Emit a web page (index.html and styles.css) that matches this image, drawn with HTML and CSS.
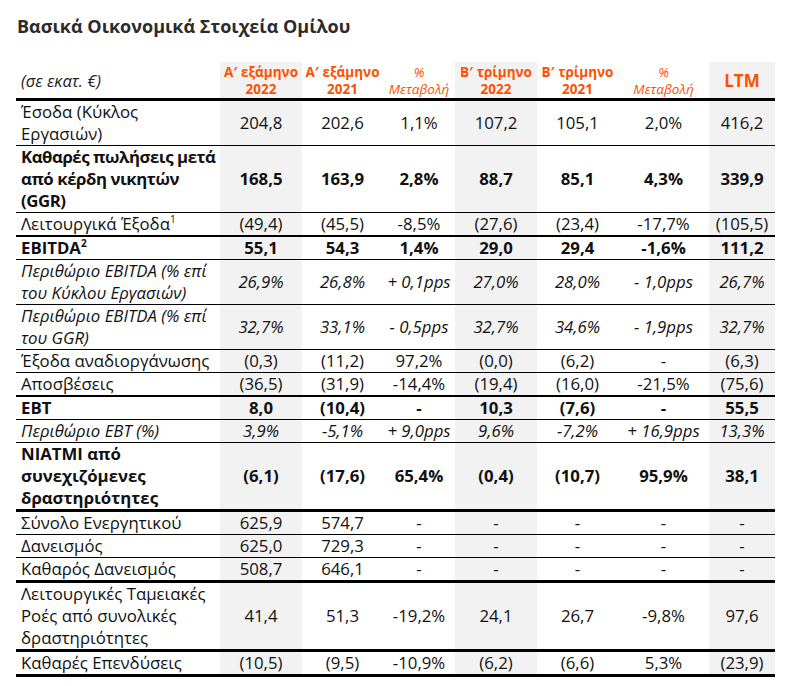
FILE: index.html
```html
<!DOCTYPE html>
<html lang="el">
<head>
<meta charset="utf-8">
<link rel="stylesheet" href="styles.css">
</head>
<body>
<h1 class="title">Βασικά Οικονομικά Στοιχεία Ομίλου</h1>
<table class="fin">
  <colgroup>
    <col class="c-label"><col class="c-a"><col class="c-b"><col class="c-c"><col class="c-d"><col class="c-e"><col class="c-f"><col class="c-g">
  </colgroup>
  <thead>
    <tr class="thick3">
      <th class="unit">(σε εκατ. €)</th>
      <th class="hd shade">Α′ εξάμηνο<br>2022</th>
      <th class="hd">Α′ εξάμηνο<br>2021</th>
      <th class="hp">%<br>Μεταβολή</th>
      <th class="hd shade">Β′ τρίμηνο<br>2022</th>
      <th class="hd">Β′ τρίμηνο<br>2021</th>
      <th class="hp">%<br>Μεταβολή</th>
      <th class="hd ltm shade">LTM</th>
    </tr>
  </thead>
  <tbody>
    <tr><td class="lbl">Έσοδα (Κύκλος Εργασιών)</td><td class="shade">204,8</td><td>202,6</td><td>1,1%</td><td class="shade">107,2</td><td>105,1</td><td>2,0%</td><td class="shade">416,2</td></tr>
    <tr class="b"><td class="lbl tight">Καθαρές πωλήσεις μετά από κέρδη νικητών (GGR)</td><td class="shade">168,5</td><td>163,9</td><td>2,8%</td><td class="shade">88,7</td><td>85,1</td><td>4,3%</td><td class="shade">339,9</td></tr>
    <tr class="thick2"><td class="lbl">Λειτουργικά Έξοδα<sup>1</sup></td><td class="shade">(49,4)</td><td>(45,5)</td><td>-8,5%</td><td class="shade">(27,6)</td><td>(23,4)</td><td>-17,7%</td><td class="shade">(105,5)</td></tr>
    <tr class="b"><td class="lbl">EBITDA<sup>2</sup></td><td class="shade">55,1</td><td>54,3</td><td>1,4%</td><td class="shade">29,0</td><td>29,4</td><td>-1,6%</td><td class="shade">111,2</td></tr>
    <tr class="i"><td class="lbl">Περιθώριο EBITDA (% επί του Κύκλου Εργασιών)</td><td class="shade">26,9%</td><td>26,8%</td><td>+ 0,1pps</td><td class="shade">27,0%</td><td>28,0%</td><td>- 1,0pps</td><td class="shade">26,7%</td></tr>
    <tr class="i"><td class="lbl">Περιθώριο EBITDA (% επί του GGR)</td><td class="shade">32,7%</td><td>33,1%</td><td>- 0,5pps</td><td class="shade">32,7%</td><td>34,6%</td><td>- 1,9pps</td><td class="shade">32,7%</td></tr>
    <tr><td class="lbl">Έξοδα αναδιοργάνωσης</td><td class="shade">(0,3)</td><td>(11,2)</td><td>97,2%</td><td class="shade">(0,0)</td><td>(6,2)</td><td>-</td><td class="shade">(6,3)</td></tr>
    <tr class="thick2"><td class="lbl">Αποσβέσεις</td><td class="shade">(36,5)</td><td>(31,9)</td><td>-14,4%</td><td class="shade">(19,4)</td><td>(16,0)</td><td>-21,5%</td><td class="shade">(75,6)</td></tr>
    <tr class="b"><td class="lbl">EBT</td><td class="shade">8,0</td><td>(10,4)</td><td>-</td><td class="shade">10,3</td><td>(7,6)</td><td>-</td><td class="shade">55,5</td></tr>
    <tr class="i"><td class="lbl">Περιθώριο EBT (%)</td><td class="shade">3,9%</td><td>-5,1%</td><td>+ 9,0pps</td><td class="shade">9,6%</td><td>-7,2%</td><td>+ 16,9pps</td><td class="shade">13,3%</td></tr>
    <tr class="b thick3"><td class="lbl">NIATMI από συνεχιζόμενες δραστηριότητες</td><td class="shade">(6,1)</td><td>(17,6)</td><td>65,4%</td><td class="shade">(0,4)</td><td>(10,7)</td><td>95,9%</td><td class="shade">38,1</td></tr>
    <tr><td class="lbl">Σύνολο Ενεργητικού</td><td class="shade">625,9</td><td>574,7</td><td>-</td><td class="shade">-</td><td>-</td><td>-</td><td class="shade">-</td></tr>
    <tr><td class="lbl">Δανεισμός</td><td class="shade">625,0</td><td>729,3</td><td>-</td><td class="shade">-</td><td>-</td><td>-</td><td class="shade">-</td></tr>
    <tr class="thick3"><td class="lbl">Καθαρός Δανεισμός</td><td class="shade">508,7</td><td>646,1</td><td>-</td><td class="shade">-</td><td>-</td><td>-</td><td class="shade">-</td></tr>
    <tr class="thick3"><td class="lbl">Λειτουργικές Ταμειακές Ροές από συνολικές δραστηριότητες</td><td class="shade">41,4</td><td>51,3</td><td>-19,2%</td><td class="shade">24,1</td><td>26,7</td><td>-9,8%</td><td class="shade">97,6</td></tr>
    <tr class="thick3"><td class="lbl">Καθαρές Επενδύσεις</td><td class="shade">(10,5)</td><td>(9,5)</td><td>-10,9%</td><td class="shade">(6,2)</td><td>(6,6)</td><td>5,3%</td><td class="shade">(23,9)</td></tr>
  </tbody>
</table>
</body>
</html>
```
FILE: styles.css
```css
html, body {
  margin: 0;
  padding: 0;
  background: #ffffff;
}
body {
  padding: 13px 10px 0 16px;
  font-family: "Open Sans", "Noto Sans", "DejaVu Sans", sans-serif;
  color: #111;
}
.title {
  margin: 0 0 0 1px;
  font-size: 18px;
  line-height: 26px;
  font-weight: 700;
  color: #2b2b2b;
}
.fin {
  margin-top: 23px;
  border-collapse: collapse;
  table-layout: fixed;
  width: 759px;
  font-size: 16.8px;
  line-height: 22px;
}
.c-label { width: 204px; }
.c-a { width: 82px; }
.c-b { width: 81px; }
.c-c { width: 72px; }
.c-d { width: 82px; }
.c-e { width: 81px; }
.c-f { width: 91px; }
.c-g { width: 66px; }

.fin th, .fin td {
  padding: 0 2px;
  text-align: center;
  vertical-align: middle;
  border-bottom: 1px solid #000;
  white-space: nowrap;
}
.fin td.lbl {
  text-align: left;
  white-space: normal;
  padding-left: 5px;
  padding-right: 4px;
}
.fin td.tight {
  padding-right: 0;
  letter-spacing: -0.45px;
}
.fin th {
  height: 36px;
  font-size: 13.5px;
  line-height: 17px;
  color: #ff5000;
  vertical-align: bottom;
  padding-bottom: 0;
}
.fin th.unit {
  text-align: left;
  font-style: italic;
  font-weight: 400;
  color: #222;
  font-size: 16.5px;
  vertical-align: middle;
  padding-left: 5px;
}
.fin th.hp {
  font-weight: 400;
  font-style: italic;
}
.fin th.ltm {
  font-size: 17px;
  vertical-align: middle;
}
.shade { background: #f2f2f2; }
.b td { font-weight: 700; }
.i td { font-style: italic; }
.thick3 th, .thick3 td { border-bottom: 3px solid #000; }
.thick2 td { border-bottom: 2px solid #000; }
sup {
  font-size: 10px;
  line-height: 0;
  vertical-align: 7px;
}
```
